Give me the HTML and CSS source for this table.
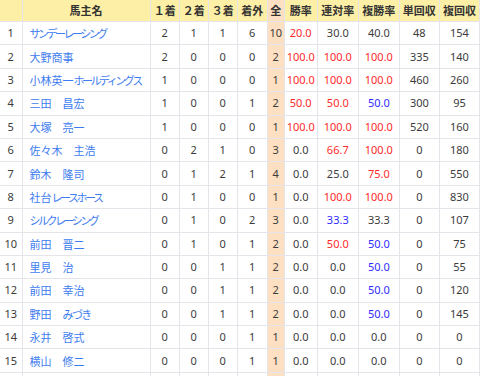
FILE: index.html
```html
<!DOCTYPE html>
<html lang="ja">
<head>
<meta charset="utf-8">
<link rel="stylesheet" href="styles.css">
</head>
<body>
<table class="tbl">
  <colgroup>
    <col class="c-no"><col class="c-name"><col class="c-n"><col class="c-n"><col class="c-n"><col class="c-out"><col class="c-all"><col class="c-win"><col class="c-r"><col class="c-r"><col class="c-ret"><col class="c-ret">
  </colgroup>
  <thead>
    <tr>
      <th></th><th>馬主名</th><th>１着</th><th>２着</th><th>３着</th><th>着外</th><th class="all">全</th><th>勝率</th><th>連対率</th><th>複勝率</th><th>単回収</th><th>複回収</th>
    </tr>
  </thead>
  <tbody>
    <tr><td>1</td><td class="name"><span class="kana">サンデーレーシング</span></td><td>2</td><td>1</td><td>1</td><td>6</td><td class="all">10</td><td class="red">20.0</td><td>30.0</td><td>40.0</td><td>48</td><td>154</td></tr>
    <tr><td>2</td><td class="name">大野商事</td><td>2</td><td>0</td><td>0</td><td>0</td><td class="all">2</td><td class="red">100.0</td><td class="red">100.0</td><td class="red">100.0</td><td>335</td><td>140</td></tr>
    <tr><td>3</td><td class="name">小林英一<span class="kana">ホールディングス</span></td><td>1</td><td>0</td><td>0</td><td>0</td><td class="all">1</td><td class="red">100.0</td><td class="red">100.0</td><td class="red">100.0</td><td>460</td><td>260</td></tr>
    <tr><td>4</td><td class="name">三田　昌宏</td><td>1</td><td>0</td><td>0</td><td>1</td><td class="all">2</td><td class="red">50.0</td><td class="red">50.0</td><td class="blue">50.0</td><td>300</td><td>95</td></tr>
    <tr><td>5</td><td class="name">大塚　亮一</td><td>1</td><td>0</td><td>0</td><td>0</td><td class="all">1</td><td class="red">100.0</td><td class="red">100.0</td><td class="red">100.0</td><td>520</td><td>160</td></tr>
    <tr><td>6</td><td class="name">佐々木　主浩</td><td>0</td><td>2</td><td>1</td><td>0</td><td class="all">3</td><td>0.0</td><td class="red">66.7</td><td class="red">100.0</td><td>0</td><td>180</td></tr>
    <tr><td>7</td><td class="name">鈴木　隆司</td><td>0</td><td>1</td><td>2</td><td>1</td><td class="all">4</td><td>0.0</td><td>25.0</td><td class="red">75.0</td><td>0</td><td>550</td></tr>
    <tr><td>8</td><td class="name">社台<span class="kana">レースホース</span></td><td>0</td><td>1</td><td>0</td><td>0</td><td class="all">1</td><td>0.0</td><td class="red">100.0</td><td class="red">100.0</td><td>0</td><td>830</td></tr>
    <tr><td>9</td><td class="name"><span class="kana">シルクレーシング</span></td><td>0</td><td>1</td><td>0</td><td>2</td><td class="all">3</td><td>0.0</td><td class="blue">33.3</td><td>33.3</td><td>0</td><td>107</td></tr>
    <tr><td>10</td><td class="name">前田　晋二</td><td>0</td><td>1</td><td>0</td><td>1</td><td class="all">2</td><td>0.0</td><td class="red">50.0</td><td class="blue">50.0</td><td>0</td><td>75</td></tr>
    <tr><td>11</td><td class="name">里見　治</td><td>0</td><td>0</td><td>1</td><td>1</td><td class="all">2</td><td>0.0</td><td>0.0</td><td class="blue">50.0</td><td>0</td><td>55</td></tr>
    <tr><td>12</td><td class="name">前田　幸治</td><td>0</td><td>0</td><td>1</td><td>1</td><td class="all">2</td><td>0.0</td><td>0.0</td><td class="blue">50.0</td><td>0</td><td>120</td></tr>
    <tr><td>13</td><td class="name">野田　<span class="kana hira">みづき</span></td><td>0</td><td>0</td><td>1</td><td>1</td><td class="all">2</td><td>0.0</td><td>0.0</td><td class="blue">50.0</td><td>0</td><td>145</td></tr>
    <tr><td>14</td><td class="name">永井　啓式</td><td>0</td><td>0</td><td>0</td><td>1</td><td class="all">1</td><td>0.0</td><td>0.0</td><td>0.0</td><td>0</td><td>0</td></tr>
    <tr><td>15</td><td class="name">横山　修二</td><td>0</td><td>0</td><td>0</td><td>1</td><td class="all">1</td><td>0.0</td><td>0.0</td><td>0.0</td><td>0</td><td>0</td></tr>
    <tr><td></td><td class="name"></td><td></td><td></td><td></td><td></td><td class="all"></td><td></td><td></td><td></td><td></td><td></td></tr>
  </tbody>
</table>
</body>
</html>
```
FILE: styles.css
```css
html, body {
  margin: 0;
  padding: 0;
  background: #ffffff;
}
body {
  font-family: "Noto Sans", "Noto Sans CJK JP", sans-serif;
  font-size: 11px;
  color: #3c3c3c;
  overflow: hidden;
}
.tbl {
  border-collapse: collapse;
  table-layout: fixed;
  width: 480px;
}
.c-no { width: 22px; }
.c-name { width: 128px; }
.c-n { width: 29px; }
.c-out { width: 30px; }
.c-all { width: 17px; }
.c-win { width: 33px; }
.c-r { width: 41px; }
.c-ret { width: 40px; }

.tbl th, .tbl td {
  border: 1px solid #e4e4ea;
  padding: 0;
  text-align: center;
  white-space: nowrap;
  overflow: hidden;
}
.tbl tr > :first-child { border-left: none; }
.tbl thead tr th { border-top: none; }
.tbl th {
  background: #feefa6;
  font-family: "Noto Sans CJK JP", sans-serif;
  font-weight: bold;
  font-size: 11px;
  color: #333333;
  height: 21px;
  line-height: 21px;
}
.tbl td {
  height: 22.4px;
  line-height: 20px;
}
.tbl td.name {
  text-align: left;
  padding-left: 7px;
  color: #3d7bf0;
  font-family: "Noto Sans CJK JP", sans-serif;
  font-size: 11px;
}
.kana { letter-spacing: -2.5px; }
.kana.hira { letter-spacing: -1.6px; }
.tbl .all {
  background: #fde0c2;
}
.tbl td.blue { color: #2f2cff; }
.tbl td.red { color: #ff2a2a; }
```
